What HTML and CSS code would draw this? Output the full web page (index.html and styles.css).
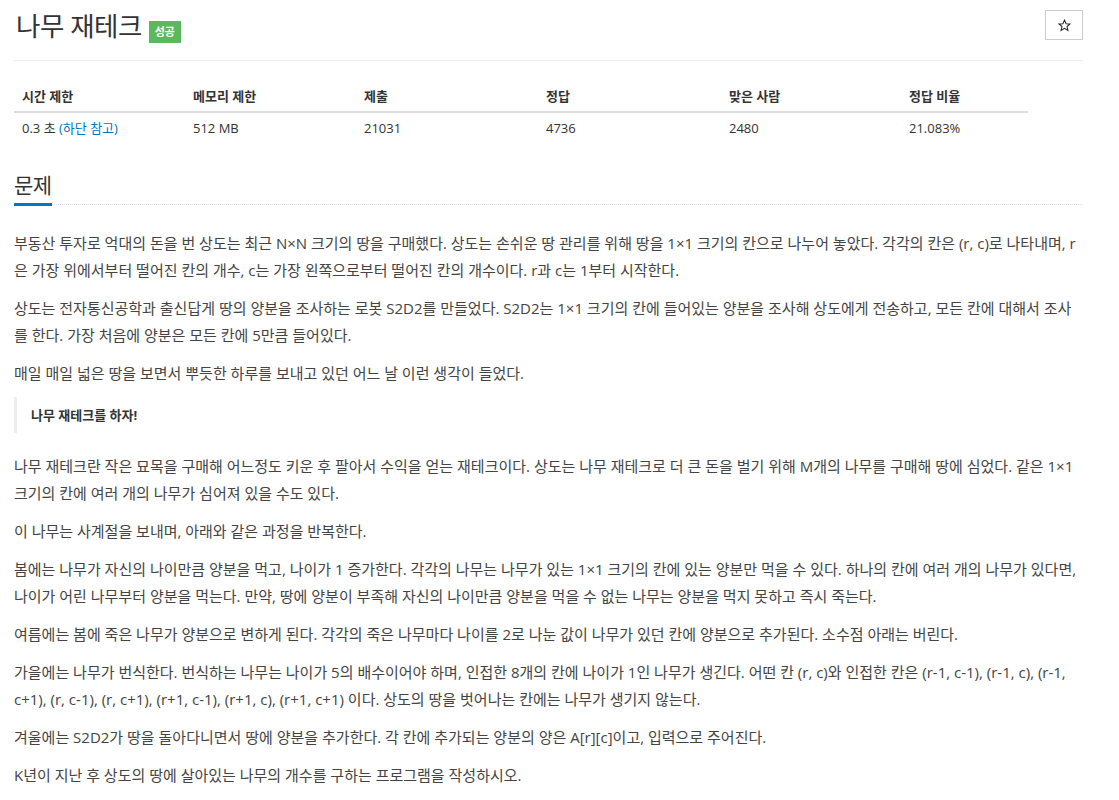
FILE: index.html
```html
<!DOCTYPE html>
<html lang="ko">
<head>
<meta charset="utf-8">
<title>나무 재테크</title>
<link rel="stylesheet" href="styles.css">
</head>
<body>
<div class="container">
  <div class="page-header">
    <div class="title-wrap">
      <h1 class="title">나무 재테크</h1>
      <span class="badge">성공</span>
    </div>
    <button class="star-btn" type="button" aria-label="즐겨찾기">
      <svg class="star-icon" viewBox="0 0 14 14" width="13" height="13">
        <path d="M7 1.2 L8.7 5.1 L12.9 5.4 L9.7 8.1 L10.7 12.2 L7 10 L3.3 12.2 L4.3 8.1 L1.1 5.4 L5.3 5.1 Z" fill="none" stroke="#222" stroke-width="1.1" stroke-linejoin="miter"/>
      </svg>
    </button>
  </div>

  <table class="info">
    <thead>
      <tr>
        <th class="c1">시간 제한</th>
        <th class="c2">메모리 제한</th>
        <th class="c3">제출</th>
        <th class="c4">정답</th>
        <th class="c5">맞은 사람</th>
        <th class="c6">정답 비율</th>
      </tr>
    </thead>
    <tbody>
      <tr>
        <td>0.3 초 <a class="link" href="#">(하단 참고)</a></td>
        <td>512 MB</td>
        <td>21031</td>
        <td>4736</td>
        <td>2480</td>
        <td>21.083%</td>
      </tr>
    </tbody>
  </table>

  <section class="problem">
    <div class="headline"><h2>문제</h2></div>
    <div class="desc">
      <p>부동산 투자로 억대의 돈을 번 상도는 최근 N×N 크기의 땅을 구매했다. 상도는 손쉬운 땅 관리를 위해 땅을 1×1 크기의 칸으로 나누어 놓았다. 각각의 칸은 (r, c)로 나타내며, r은 가장 위에서부터 떨어진 칸의 개수, c는 가장 왼쪽으로부터 떨어진 칸의 개수이다. r과 c는 1부터 시작한다.</p>
      <p>상도는 전자통신공학과 출신답게 땅의 양분을 조사하는 로봇 S2D2를 만들었다. S2D2는 1×1 크기의 칸에 들어있는 양분을 조사해 상도에게 전송하고, 모든 칸에 대해서 조사를 한다. 가장 처음에 양분은 모든 칸에 5만큼 들어있다.</p>
      <p>매일 매일 넓은 땅을 보면서 뿌듯한 하루를 보내고 있던 어느 날 이런 생각이 들었다.</p>
      <blockquote><p>나무 재테크를 하자!</p></blockquote>
      <p>나무 재테크란 작은 묘목을 구매해 어느정도 키운 후 팔아서 수익을 얻는 재테크이다. 상도는 나무 재테크로 더 큰 돈을 벌기 위해 M개의 나무를 구매해 땅에 심었다. 같은 1×1 크기의 칸에 여러 개의 나무가 심어져 있을 수도 있다.</p>
      <p>이 나무는 사계절을 보내며, 아래와 같은 과정을 반복한다.</p>
      <p>봄에는 나무가 자신의 나이만큼 양분을 먹고, 나이가 1 증가한다. 각각의 나무는 나무가 있는 1×1 크기의 칸에 있는 양분만 먹을 수 있다. 하나의 칸에 여러 개의 나무가 있다면, 나이가 어린 나무부터 양분을 먹는다. 만약, 땅에 양분이 부족해 자신의 나이만큼 양분을 먹을 수 없는 나무는 양분을 먹지 못하고 즉시 죽는다.</p>
      <p>여름에는 봄에 죽은 나무가 양분으로 변하게 된다. 각각의 죽은 나무마다 나이를 2로 나눈 값이 나무가 있던 칸에 양분으로 추가된다. 소수점 아래는 버린다.</p>
      <p>가을에는 나무가 번식한다. 번식하는 나무는 나이가 5의 배수이어야 하며, 인접한 8개의 칸에 나이가 1인 나무가 생긴다. 어떤 칸 (r, c)와 인접한 칸은 (r-1, c-1), (r-1, c), (r-1, c+1), (r, c-1), (r, c+1), (r+1, c-1), (r+1, c), (r+1, c+1) 이다. 상도의 땅을 벗어나는 칸에는 나무가 생기지 않는다.</p>
      <p>겨울에는 S2D2가 땅을 돌아다니면서 땅에 양분을 추가한다. 각 칸에 추가되는 양분의 양은 A[r][c]이고, 입력으로 주어진다.</p>
      <p>K년이 지난 후 상도의 땅에 살아있는 나무의 개수를 구하는 프로그램을 작성하시오.</p>
    </div>
  </section>
</div>
</body>
</html>
```

FILE: styles.css
```css
* { box-sizing: border-box; }

html, body {
  margin: 0;
  padding: 0;
  background: #fff;
}

body {
  font-family: "Open Sans", "Noto Sans CJK KR", sans-serif;
  color: #444;
}

.container {
  width: 1083px;
  padding-left: 14px;
}

.page-header {
  display: flex;
  justify-content: space-between;
  align-items: flex-start;
  padding-top: 10px;
  height: 61px;
  border-bottom: 1px solid #eee;
}

.title-wrap {
  display: flex;
  align-items: flex-start;
  padding-left: 2px;
}

.title {
  margin: 0;
  font-size: 26.5px;
  line-height: 32px;
  font-weight: 400;
  color: #333;
  letter-spacing: -0.5px;
}

.badge {
  margin-left: 7px;
  margin-top: 11px;
  width: 32px;
  height: 22px;
  background: #5cb85c;
  color: #fff;
  font-size: 11px;
  font-weight: 700;
  line-height: 22px;
  text-align: center;
}

.star-btn {
  display: flex;
  align-items: center;
  justify-content: center;
  width: 38px;
  height: 30px;
  border: 1px solid #ccc;
  background: #fff;
  padding: 0;
}

.star-icon {
  display: block;
}

.info {
  width: 1014px;
  margin-top: 18px;
  border-collapse: collapse;
  font-size: 13px;
  color: #333;
}

.info th {
  text-align: left;
  font-weight: 700;
  padding: 8px 8px 6px;
  line-height: 18px;
  border-bottom: 2px solid #ddd;
}

.info td {
  padding: 6px 8px 8px;
  line-height: 18px;
}

.c1 { width: 171px; }
.c2 { width: 171px; }
.c3 { width: 182px; }
.c4 { width: 183px; }
.c5 { width: 180px; }
.c6 { width: 127px; }

.link {
  color: #0076c0;
  text-decoration: none;
}

.problem {
  margin-top: 25px;
}

.headline {
  border-bottom: 1px dotted #dde2ea;
}

.headline h2 {
  display: inline-block;
  margin: 0 0 -2px;
  padding-bottom: 3px;
  font-size: 21px;
  line-height: 30px;
  font-weight: 400;
  color: #333;
  letter-spacing: -0.5px;
  border-bottom: 3px solid #0076c0;
}

.desc {
  margin-top: 25px;
  font-size: 15px;
  line-height: 27px;
}

.desc p {
  margin: 0 0 11px;
}

.desc blockquote {
  margin: -1px 0 20px;
  padding: 10px 14px;
  border-left: 3px solid #eee;
}

.desc blockquote p {
  margin: 0;
  font-size: 13px;
  line-height: 16px;
  font-weight: 700;
  color: #333;
}
```
